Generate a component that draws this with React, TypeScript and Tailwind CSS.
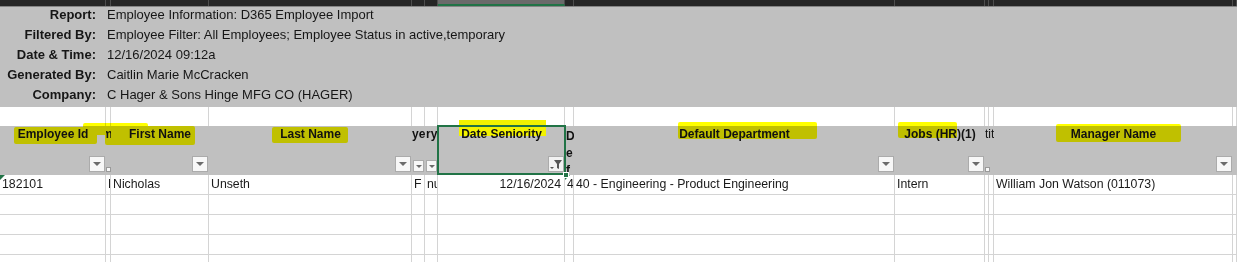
import React from 'react';

// column widths of the sheet, left to right
const GRID =
  'grid grid-cols-[106px_5px_98px_203px_13px_13px_127px_9px_321px_90px_4px_5px_239px_4px]';
const COL_COUNT = 14;

const REPORT: [string, string][] = [
  ['Report:', 'Employee Information: D365 Employee Import'],
  ['Filtered By:', 'Employee Filter: All Employees; Employee Status in active,temporary'],
  ['Date & Time:', '12/16/2024 09:12a'],
  ['Generated By:', 'Caitlin Marie McCracken'],
  ['Company:', 'C Hager & Sons Hinge MFG CO (HAGER)'],
];

const DATA: { text: string; right?: boolean; flag?: boolean }[] = [
  { text: '182101', flag: true },
  { text: 'N' },
  { text: 'Nicholas' },
  { text: 'Unseth' },
  { text: 'F' },
  { text: 'nu' },
  { text: '12/16/2024', right: true },
  { text: '4', flag: true },
  { text: '40 - Engineering - Product Engineering' },
  { text: 'Intern' },
  { text: '' },
  { text: '' },
  { text: 'William Jon Watson (011073)' },
  { text: 'I' },
];

const font = "font-['Liberation_Sans',Arial,sans-serif]";

const Dropdown: React.FC<{ small?: boolean }> = ({ small }) => (
  <div
    className={`flex items-center justify-center bg-[#f7f7f7] border border-[#ababab] ${
      small ? 'w-[11px] h-[12px]' : 'w-[16px] h-[16px]'
    }`}
  >
    <div
      className={`w-0 h-0 border-t-[#6b6b6b] border-l-transparent border-r-transparent ${
        small ? 'border-t-[3px] border-l-[3px] border-r-[3px]' : 'border-t-[4px] border-l-[4px] border-r-[4px]'
      }`}
    />
  </div>
);

const TinyBox = () => <div className="w-[5px] h-[5px] bg-[#f7f7f7] border border-[#9a9a9a]" />;

const FilterButton = () => (
  <div className="w-[16px] h-[16px] bg-[#f2f2f2] border border-[#ababab] flex items-center justify-center">
    <svg width="14" height="14" viewBox="0 0 14 14">
      <path d="M1 10h4l-2 2z" fill="#555" />
      <path d="M5 3h8l-3 4v5l-2-1V7z" fill="#555" />
    </svg>
  </div>
);

const HeaderCell: React.FC<{
  label?: React.ReactNode;
  control?: React.ReactNode;
  narrow?: boolean;
  className?: string;
  children?: React.ReactNode;
}> = ({ label, control, narrow, className = '', children }) => (
  <div className={`relative flex flex-col justify-between ${narrow ? 'overflow-hidden' : ''} ${className}`}>
    <div
      className={`relative z-10 pt-[1px] font-bold text-[12px] leading-[15px] text-[#111] ${
        narrow ? 'whitespace-nowrap' : 'text-center'
      }`}
    >
      {label}
    </div>
    <div className={`flex ${narrow ? 'justify-start' : 'justify-end pr-[1px]'} pb-[3px]`}>{control}</div>
    {children}
  </div>
);

export default function App() {
  return (
    <div className={`relative w-[1237px] h-[262px] overflow-hidden bg-white ${font}`}>
      {/* column letter bar */}
      <div className={`${GRID} h-[7px] bg-[#262626] border-b border-[#858585]`}>
        {Array.from({ length: COL_COUNT }).map((_, i) => (
          <div
            key={i}
            className={
              i === 6
                ? 'bg-[#6a6a6a] border-r border-[#4d4d4d] border-b-2 border-b-[#217346]'
                : 'border-r border-[#4d4d4d]'
            }
          />
        ))}
      </div>

      {/* report info */}
      <div className="h-[100px] bg-[#c0c0c0] text-[13px] text-[#161616]">
        {REPORT.map(([k, v]) => (
          <div key={k} className="flex h-[20px] leading-[16px]">
            <div className="w-[96px] shrink-0 text-right font-bold">{k}</div>
            <div className="pl-[11px] whitespace-nowrap">{v}</div>
          </div>
        ))}
      </div>

      {/* blank row */}
      <div className={`${GRID} h-[19px]`}>
        {Array.from({ length: COL_COUNT }).map((_, i) => (
          <div key={i} className="border-r border-[#d4d4d4]" />
        ))}
      </div>

      {/* column headers */}
      <div className={`${GRID} h-[49px] bg-[#c0c0c0]`}>
        <HeaderCell label="Employee Id" control={<Dropdown />} />
        <HeaderCell label={<span className="inline-block -ml-[4px]">m</span>} control={<TinyBox />} narrow />
        <HeaderCell label="First Name" control={<Dropdown />} />
        <HeaderCell label="Last Name" control={<Dropdown />} />
        <HeaderCell label="ye" control={<div className="pl-[1px]"><Dropdown small /></div>} narrow />
        <HeaderCell label={<span className="pl-[1px]">ry</span>} control={<div className="pl-[1px]"><Dropdown small /></div>} narrow />
        <HeaderCell
          label={
            <span className="relative inline-block">
              <span className="absolute left-[-2px] right-[-4px] top-[-7px] h-[16px] bg-[#f2f200]" />
              <span className="relative">Date Seniority</span>
            </span>
          }
          control={<FilterButton />}
        >
          <div className="absolute left-[-1px] right-[-1px] top-[-1px] bottom-0 border-2 border-[#217346] z-20" />
          <div className="absolute right-[-4px] bottom-[-3px] w-[6px] h-[6px] bg-[#217346] border border-white z-30" />
        </HeaderCell>
        <HeaderCell
          label={
            <div className="pl-[1px] pt-[1px] text-left leading-[17px]">
              D<br />e<br />f
            </div>
          }
          control={<div className="relative z-20 pl-[1px] -mb-[1px]"><TinyBox /></div>}
          narrow
        />
        <HeaderCell label="Default Department" control={<Dropdown />} />
        <HeaderCell label="Jobs (HR)(1)" control={<Dropdown />} />
        <HeaderCell label={<span className="font-normal">tit</span>} control={<TinyBox />} narrow className="col-span-2" />
        <HeaderCell label="Manager Name" control={<Dropdown />} />
        <div />
      </div>

      {/* data row */}
      <div className={`${GRID} h-[20px] text-[12.3px] leading-[19px] text-[#1a1a1a]`}>
        {DATA.map((c, i) => (
          <div
            key={i}
            className={`relative overflow-hidden whitespace-nowrap border-r border-b border-[#d4d4d4] ${
              c.right ? 'text-right pr-[3px]' : 'pl-[2px]'
            }`}
          >
            {c.flag && (
              <div className="absolute left-0 top-0 w-0 h-0 border-t-[5px] border-r-[5px] border-t-[#217346] border-r-transparent" />
            )}
            {c.text}
          </div>
        ))}
      </div>

      {/* empty rows */}
      {Array.from({ length: 4 }).map((_, r) => (
        <div key={r} className={`${GRID} h-[20px]`}>
          {Array.from({ length: COL_COUNT }).map((_, i) => (
            <div key={i} className="border-r border-b border-[#d4d4d4]" />
          ))}
        </div>
      ))}

      {/* highlighter marks over the headers */}
      <div className="pointer-events-none absolute inset-0 mix-blend-multiply">
        <div className="absolute left-[14px] top-[127px] w-[83px] h-[17px] bg-[#ffff00] rounded-[2px]" />
        <div className="absolute left-[83px] top-[123px] w-[65px] h-[12px] bg-[#ffff00] rounded-[2px]" />
        <div className="absolute left-[105px] top-[126px] w-[90px] h-[19px] bg-[#ffff00] rounded-[2px]" />
        <div className="absolute left-[272px] top-[127px] w-[76px] h-[16px] bg-[#ffff00] rounded-[2px]" />
        <div className="absolute left-[678px] top-[122px] w-[139px] h-[17px] bg-[#ffff00] rounded-[2px]" />
        <div className="absolute left-[898px] top-[122px] w-[59px] h-[16px] bg-[#ffff00] rounded-[2px]" />
        <div className="absolute left-[1056px] top-[124px] w-[125px] h-[18px] bg-[#ffff00] rounded-[2px]" />
      </div>
    </div>
  );
}
